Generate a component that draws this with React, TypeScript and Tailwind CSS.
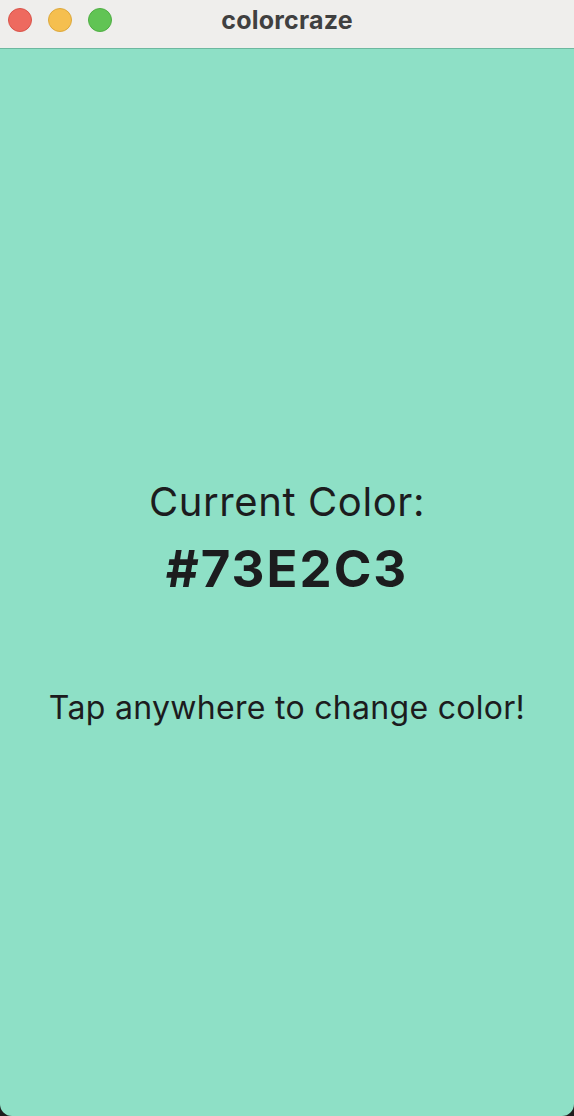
export default function App() {
  return (
    <div className="w-[574px] h-[1116px] bg-[#1e1e1e] flex flex-col" style={{ fontFamily: "Inter, 'Noto Sans', sans-serif" }}>
      {/* title bar */}
      <div className="h-[49px] bg-[#efeeec] border-b border-[#6db89f] relative flex justify-center shrink-0">
        <div className="absolute left-[8px] top-[8px] flex gap-[16px]">
          <span className="w-[24px] h-[24px] rounded-full bg-[#ee6a5f] border border-[#d9544a]" />
          <span className="w-[24px] h-[24px] rounded-full bg-[#f5bf4f] border border-[#dda83c]" />
          <span className="w-[24px] h-[24px] rounded-full bg-[#61c454] border border-[#4fae43]" />
        </div>
        <span className="text-[25px] leading-[40px] font-bold text-[#404040] tracking-[0.2px]">colorcraze</span>
      </div>

      {/* content */}
      <div className="flex-1 bg-[#8ee0c6] rounded-b-[12px] flex flex-col items-center text-[#1c1c1e] pt-[433px]">
        <div className="text-[40px] leading-[40px] tracking-[0.6px]">Current Color:</div>
        <div className="text-[51px] leading-[51px] font-bold mt-[21px] tracking-[2px]">#73E2C3</div>
        <div className="text-[32px] leading-[32px] mt-[98px] tracking-[0.3px]">Tap anywhere to change color!</div>
      </div>
    </div>
  );
}
